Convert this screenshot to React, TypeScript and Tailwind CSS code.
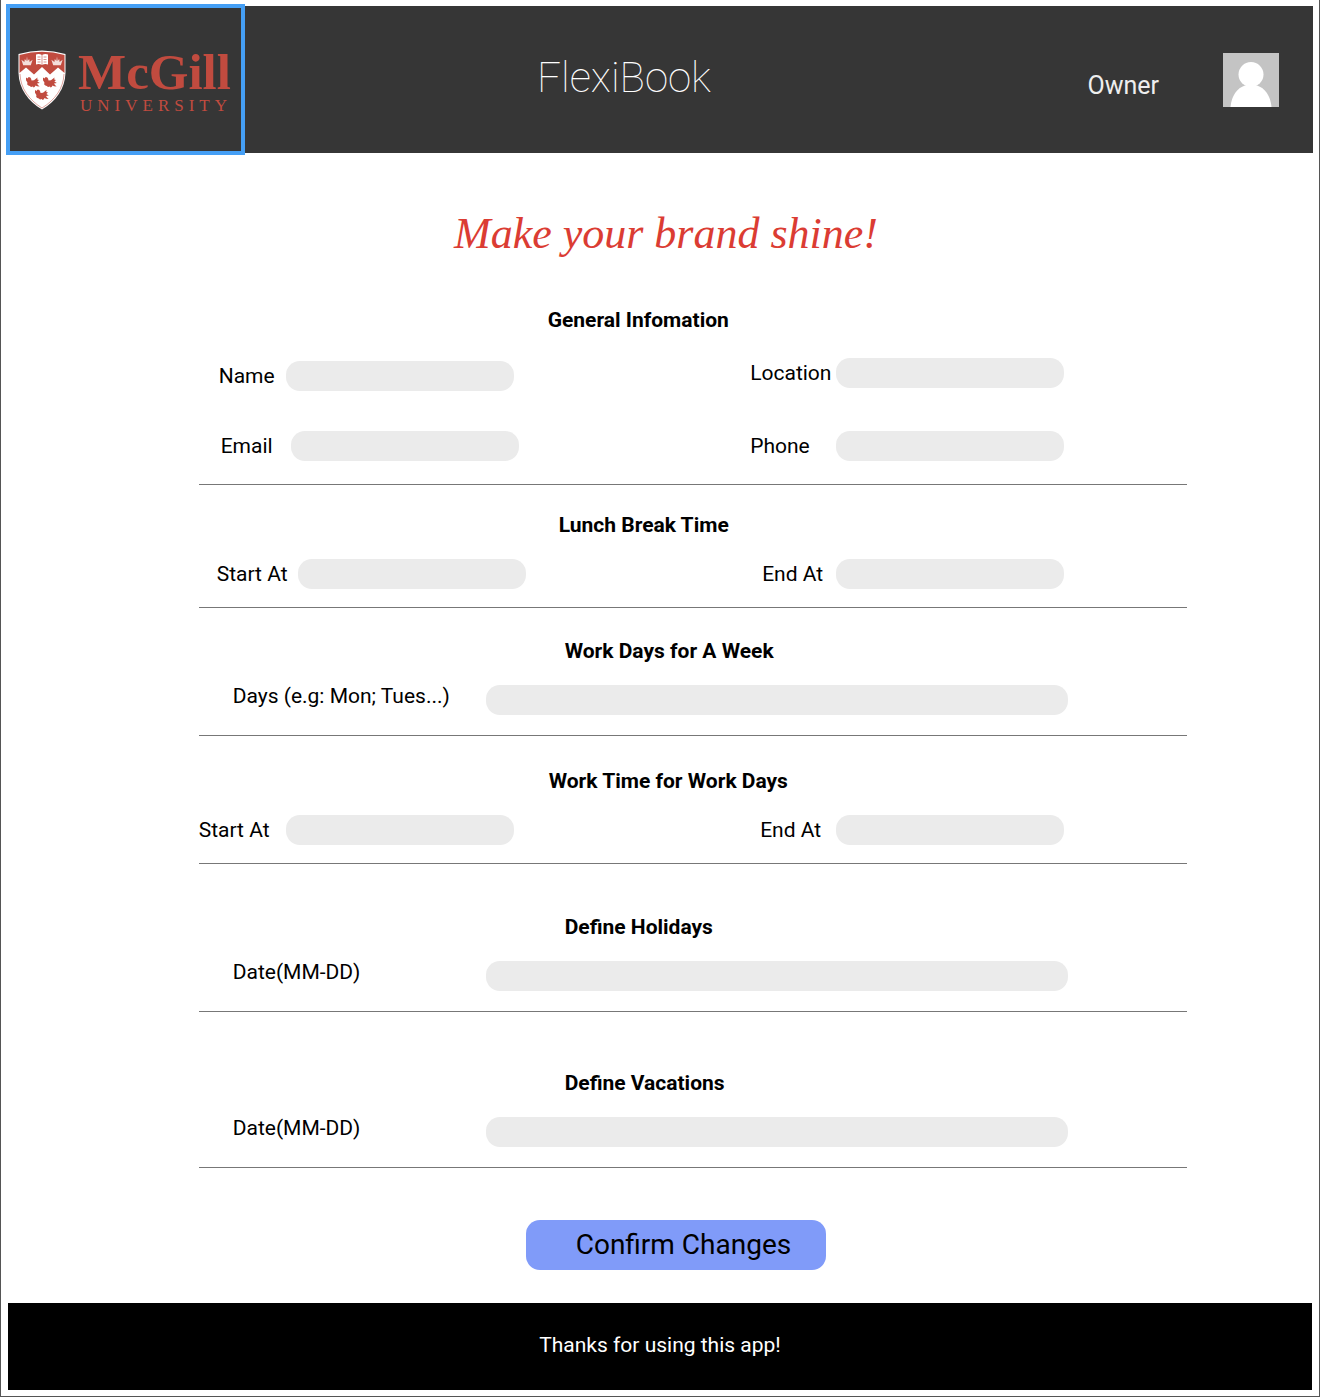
import type { ReactNode } from 'react';

function Martlet({ x, y }: { x: number; y: number }) {
  return (
    <path
      transform={`translate(${x} ${y})`}
      d="M0 .5 L1.6 1.4 L2.2 .3 L4 .2 L5 1.6 L5.6 3.4 L8 3.2 L11.5 .6 L11.2 2.6 L13 3 L11.4 4.4 L13.8 6 L11 6.4 L12 8 L13.6 9.6 L11 9.2 L9.6 8.4 L8.6 10 L7.4 10.6 L7 9.4 L5 10 L3.8 9 L2.4 8.4 L1.2 7.4 L1.4 5.6 L0 3.2 Z"
      fill="#c14b3f"
    />
  );
}

function Crown({ x }: { x: number }) {
  return (
    <path
      transform={`translate(${x} 6.500)`}
      d="M1.800 8.800 L0 3.2 L3 5.400 L3.400 2.400 L5 4.600 L5.600 0 L6.200 4.600 L7.800 2.400 L8.200 5.400 L11.200 3.200 L9.400 8.800 Z"
      fill="#f4dedb"
    />
  );
}

function Shield() {
  return (
    <svg className="h-15 w-12 shrink-0" viewBox="0 0 48 60" aria-hidden="true">
      <path d="M.5 4 Q24 -3 47.5 4 V23 C47 39 38 51 24 59.5 C10 51 1 39 .5 23 Z" fill="#fff" />
      <path d="M1.5 5 Q24 -1.7 46.5 5 V23 L40 17.500 L32 24.500 L24 17 L16 24.500 L8 17.500 L1.500 23 Z" fill="#c14b3f" />
      <path d="M2 24 C2.500 38 10.500 49.500 24 58 C37.500 49.500 45.500 38 46 24" fill="none" stroke="#c14b3f" strokeWidth=".5" />
      <Crown x={3.4} />
      <Crown x={33.4} />
      <path d="M18 4.500 Q21 3.500 24 5 Q27 3.500 30 4.500 V14.500 Q27 13.500 24 15 Q21 13.500 18 14.500 Z" fill="#fff" />
      <path d="M24 5 V15 M19.500 7 H22.500 M19.500 9.500 H22.500 M19.500 12 H22.500 M25.500 7 H28.500 M25.500 9.500 H28.500 M25.500 12 H28.500" stroke="#c14b3f" strokeWidth=".6" />
      <Martlet x={8} y={27} />
      <Martlet x={25} y={27} />
      <Martlet x={17} y={39.500} />
    </svg>
  );
}

function Header() {
  return (
    <header className="mr-1.5 ml-[5px] mt-1.5 flex h-[147px] items-center bg-[#363636] pr-[34px]">
      <a
        href="#home"
        className="-my-0.5 flex h-[151px] w-[239px] shrink-0 items-center border-4 border-[#459ff5] pl-2 text-[#c14b3f]"
      >
        <Shield />
        <span className="ml-3 flex flex-col pt-1 font-['Liberation_Serif',serif]">
          <span className="text-[51px] leading-12 font-bold">McGill</span>
          <span className="ml-0.5 text-[17px] leading-5 tracking-[5px]">UNIVERSITY</span>
        </span>
      </a>
      <h1 className="mb-1 ml-[292px] text-[42px] leading-12 font-thin text-white">FlexiBook</h1>
      <span className="mt-3 ml-auto text-[25px] leading-8 text-[#eee]">Owner</span>
      <button type="button" aria-label="Account" className="ml-16 h-[54px] w-14 shrink-0 bg-[#c4c4c4]">
        <svg className="h-full w-full" viewBox="0 0 56 54" aria-hidden="true">
          <circle cx="28" cy="21.500" r="12.500" fill="#fff" />
          <path d="M7.500 54 C8.500 43 14 35 22 32.500 H34 C42 35 47.500 43 48.500 54 Z" fill="#fff" />
        </svg>
      </button>
    </header>
  );
}

type FieldProps = { id: string; label: string; labelClass: string; inputClass?: string; className?: string };

function Field({ id, label, labelClass, inputClass = 'w-[228px]', className = 'items-center' }: FieldProps) {
  return (
    <div className={`flex ${className}`}>
      <label htmlFor={id} className={`shrink-0 text-[21px] leading-[22px] whitespace-nowrap ${labelClass}`}>
        {label}
      </label>
      <input id={id} type="text" className={`h-[30px] rounded-[14px] bg-[#ebebeb] px-3 text-lg ${inputClass}`} />
    </div>
  );
}

function Section({ title, titleClass, className, children }: { title: string; titleClass: string; className: string; children: ReactNode }) {
  return (
    <section className={`border-b border-[#777] ${className}`}>
      <h2 className={`text-[21px] leading-6 font-bold ${titleClass}`}>{title}</h2>
      {children}
    </section>
  );
}

function Pair({ className = 'mt-[22px]', children }: { className?: string; children: ReactNode }) {
  return <div className={`grid grid-cols-[1fr_437px] ${className}`}>{children}</div>;
}

export default function App() {
  return (
    <div className="flow-root border-x border-b border-[#555] bg-white pb-1.5 font-[Roboto,sans-serif] text-black">
      <Header />
      <main>
        <p className="mt-[51px] ml-3 text-center font-['Liberation_Serif',serif] text-[44px] leading-[60px] text-[#db3c33] italic">
          Make your brand shine!
        </p>
        <form className="mt-11 ml-[15%] w-3/4" onSubmit={(e) => e.preventDefault()}>
          <Section title="General Infomation" titleClass="pl-[349px]" className="pb-[23px]">
            <Pair className="mt-[26px]">
              <Field id="name" label="Name" labelClass="ml-5 w-[67px]" className="items-center pt-[3px]" />
              <Field id="location" label="Location" labelClass="w-[86px]" className="items-center pb-[3px]" />
            </Pair>
            <Pair className="mt-10">
              <Field id="email" label="Email" labelClass="ml-[22px] w-[70px]" />
              <Field id="phone" label="Phone" labelClass="w-[86px]" />
            </Pair>
          </Section>
          <Section title="Lunch Break Time" titleClass="pl-[360px]" className="pt-7 pb-[18px]">
            <Pair>
              <Field id="lunch-start" label="Start At" labelClass="ml-[18px] w-[81px]" />
              <Field id="lunch-end" label="End At" labelClass="w-[86px] pl-3" />
            </Pair>
          </Section>
          <Section title="Work Days for A Week" titleClass="pl-[366px]" className="pt-[31px] pb-5">
            <div className="mt-[22px]">
              <Field id="days" label="Days (e.g: Mon; Tues...)" labelClass="ml-[34px] w-[253px]" inputClass="w-[582px]" className="items-start" />
            </div>
          </Section>
          <Section title="Work Time for Work Days" titleClass="pl-[350px]" className="pt-[33px] pb-[18px]">
            <Pair>
              <Field id="work-start" label="Start At" labelClass="w-[87px]" />
              <Field id="work-end" label="End At" labelClass="w-[86px] pl-2.5" />
            </Pair>
          </Section>
          <Section title="Define Holidays" titleClass="pl-[366px]" className="pt-[51px] pb-5">
            <div className="mt-[22px]">
              <Field id="holidays" label="Date(MM-DD)" labelClass="ml-[34px] w-[253px]" inputClass="w-[582px]" className="items-start" />
            </div>
          </Section>
          <Section title="Define Vacations" titleClass="pl-[366px]" className="pt-[59px] pb-5">
            <div className="mt-[22px]">
              <Field id="vacations" label="Date(MM-DD)" labelClass="ml-[34px] w-[253px]" inputClass="w-[582px]" className="items-start" />
            </div>
          </Section>
          <button
            type="submit"
            className="mt-[52px] ml-[327px] block h-[50px] w-[300px] rounded-[14px] bg-[#809bf9] pl-[50px] text-left text-[28px] leading-10"
          >
            Confirm Changes
          </button>
        </form>
      </main>
      <footer className="mx-[7px] mt-[33px] flex h-[87px] items-center justify-center bg-black pb-1 text-[21px] leading-6 text-white">
        Thanks for using this app!
      </footer>
    </div>
  );
}
